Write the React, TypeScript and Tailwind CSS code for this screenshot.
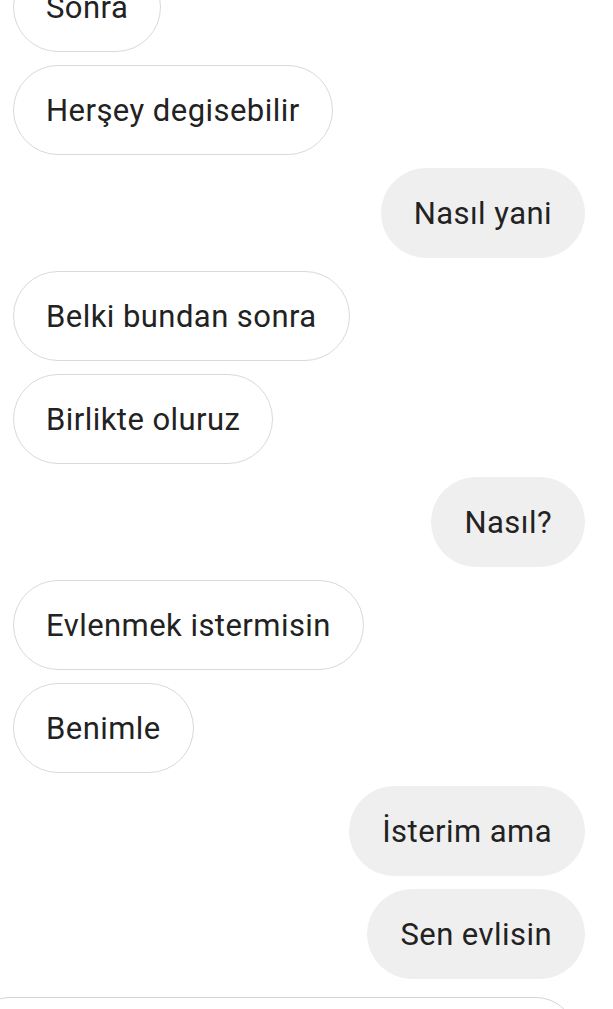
const messages: { text: string; mine: boolean }[] = [
  { text: "Sonra", mine: false },
  { text: "Herşey degisebilir", mine: false },
  { text: "Nasıl yani", mine: true },
  { text: "Belki bundan sonra", mine: false },
  { text: "Birlikte oluruz", mine: false },
  { text: "Nasıl?", mine: true },
  { text: "Evlenmek istermisin", mine: false },
  { text: "Benimle", mine: false },
  { text: "İsterim ama", mine: true },
  { text: "Sen evlisin", mine: true },
];

function Bubble({ text, mine }: { text: string; mine: boolean }) {
  return (
    <div className={mine ? "flex justify-end pr-[28px]" : "flex justify-start pl-[13px]"}>
      <div
        className={
          mine
            ? "h-[90px] flex items-center px-8 rounded-full bg-[#efefef] border border-[#efefef]"
            : "h-[90px] flex items-center px-8 rounded-full bg-white border-[1.5px] border-[#d9d9d9]"
        }
      >
        <span className="text-[31px] tracking-[0.45px] leading-none text-[#222222] whitespace-nowrap">{text}</span>
      </div>
    </div>
  );
}

export default function App() {
  return (
    <div
      className="w-[613px] h-[1009px] overflow-hidden bg-white"
      style={{ fontFamily: "Roboto, 'Noto Sans', sans-serif" }}
    >
      <div className="flex flex-col gap-[13px] -mt-[38px]">
        {messages.map((m, i) => (
          <Bubble key={i} text={m.text} mine={m.mine} />
        ))}
        <div className="mt-[5px] -ml-[30px] w-[606px] h-[80px] rounded-[40px] border-[1.5px] border-[#d4d4d4] bg-white" />
      </div>
    </div>
  );
}
